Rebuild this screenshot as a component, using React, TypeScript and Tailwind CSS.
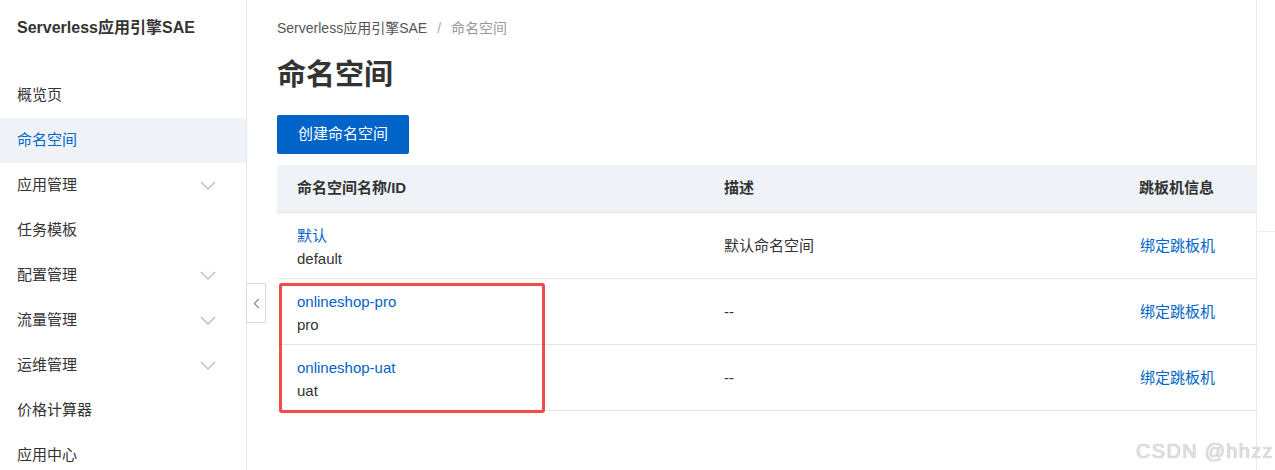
import { ChevronLeft } from "lucide-react";

const menu = [
  { label: "概览页" },
  { label: "命名空间", active: true },
  { label: "应用管理", sub: true },
  { label: "任务模板" },
  { label: "配置管理", sub: true },
  { label: "流量管理", sub: true },
  { label: "运维管理", sub: true },
  { label: "价格计算器" },
  { label: "应用中心" },
];

const rows = [
  { name: "默认", id: "default", desc: "默认命名空间" },
  { name: "onlineshop-pro", id: "pro", desc: "--" },
  { name: "onlineshop-uat", id: "uat", desc: "--" },
];

const font = { fontFamily: '"Liberation Sans", "Noto Sans CJK SC", sans-serif' };

const Chevron = () => (
  <svg width="16" height="9" viewBox="0 0 16 9" fill="none" stroke="#b5b5b5" strokeWidth="1.1">
    <polyline points="1,1 8,8 15,1" />
  </svg>
);

export default function App() {
  return (
    <div className="w-[1275px] h-[470px] flex bg-white text-[#333] overflow-hidden" style={font}>
      {/* Sidebar */}
      <aside className="w-[247px] shrink-0 border-r border-[#e8e8e8] flex flex-col overflow-hidden">
        <div className="h-[56px] shrink-0 pl-[17px] flex items-center text-[16px] font-bold text-[#333]">
          Serverless应用引擎SAE
        </div>
        <nav className="mt-[17px] shrink-0 flex flex-col">
          {menu.map((m) => (
            <div
              key={m.label}
              className={
                "h-[45px] shrink-0 pl-[17px] pr-[30px] flex items-center justify-between text-[15px] " +
                (m.active ? "bg-[#eff3f8] text-[#0064c8]" : "text-[#333]")
              }
            >
              <span>{m.label}</span>
              {m.sub && <Chevron />}
            </div>
          ))}
        </nav>
      </aside>

      {/* Main */}
      <main className="relative w-[1010px] shrink-0 border-r border-[#ececec] pl-[30px]">
        <button className="absolute left-[-1px] top-[283px] w-[20px] h-[40px] bg-white border border-[#dcdcdc] flex items-center justify-center text-[#8c8c8c]">
          <ChevronLeft size={17} strokeWidth={1.6} />
        </button>

        <div className="pt-[18px] h-[38px] text-[14px] flex items-center gap-[10px]">
          <span className="text-[#555]">Serverless应用引擎SAE</span>
          <span className="text-[#aaa]">/</span>
          <span className="text-[#999]">命名空间</span>
        </div>
        <h1 className="mt-[17px] text-[29px] font-bold leading-[40px] text-[#333]">命名空间</h1>
        <button className="mt-[20px] h-[39px] w-[132px] rounded-[2px] bg-[#0064c8] text-white text-[15px]">
          创建命名空间
        </button>

        <div className="mt-[11px] w-[980px]">
          <div className="h-[48px] bg-[#eff3f8] border-b border-[#e5e5e5] grid grid-cols-[427px_416px_137px] items-center text-[15px] font-semibold text-[#333]">
            <div className="pl-[20px]">命名空间名称/ID</div>
            <div className="pl-[20px]">描述</div>
            <div className="pl-[19px]">跳板机信息</div>
          </div>
          {rows.map((r) => (
            <div
              key={r.id}
              className="h-[66px] border-b border-[#e5e5e5] grid grid-cols-[427px_416px_137px] items-center text-[15px]"
            >
              <div className="pl-[20px] pt-[2px] flex flex-col leading-[23px]">
                <span className="text-[#0064c8]">{r.name}</span>
                <span className="text-[#333]">{r.id}</span>
              </div>
              <div className="pl-[20px] pt-[2px] text-[#333]">{r.desc}</div>
              <div className="pl-[20px] pt-[2px] text-[#0064c8]">绑定跳板机</div>
            </div>
          ))}
        </div>

        {/* highlight box */}
        <div className="absolute left-[32px] top-[283px] w-[266px] h-[130px] border-[3px] border-[#f24b4b] rounded-[3px]" />

        <div
          className="absolute left-[889px] top-[436px] whitespace-nowrap text-[20px] tracking-[1.3px] text-[#e2e2e2]"
          style={{ textShadow: "0 0 1px #9a9a9a" }}
        >
          CSDN @hhzz
        </div>
      </main>

      {/* Right strip */}
      <div className="flex-1 flex flex-col">
        <div className="h-[232px] border-b border-[#eee]" />
      </div>
    </div>
  );
}
